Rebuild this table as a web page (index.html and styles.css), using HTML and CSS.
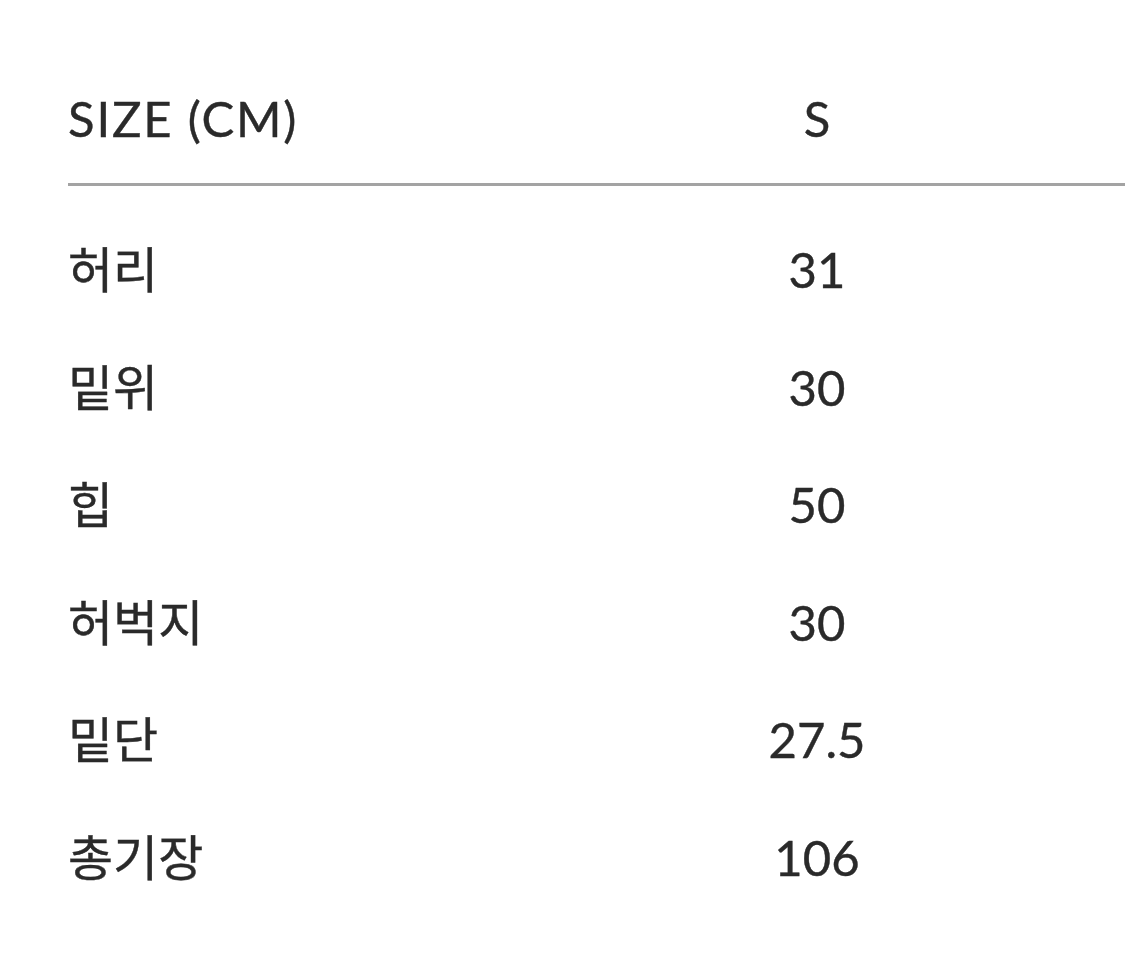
FILE: index.html
```html
<!DOCTYPE html>
<html lang="ko">
<head>
<meta charset="utf-8">
<link rel="stylesheet" href="styles.css">
</head>
<body>
<div class="table">
  <div class="row head">
    <div class="label">SIZE (CM)</div>
    <div class="val">S</div>
  </div>
  <div class="rule"></div>
  <div class="body">
    <div class="row"><div class="label">허리</div><div class="val">31</div></div>
    <div class="row"><div class="label">밑위</div><div class="val">30</div></div>
    <div class="row"><div class="label">힙</div><div class="val">50</div></div>
    <div class="row"><div class="label">허벅지</div><div class="val">30</div></div>
    <div class="row"><div class="label">밑단</div><div class="val">27.5</div></div>
    <div class="row"><div class="label">총기장</div><div class="val">106</div></div>
  </div>
</div>
</body>
</html>
```
FILE: styles.css
```css
html, body {
  margin: 0;
  padding: 0;
  background: #ffffff;
}
body {
  font-family: Lato, "Noto Sans CJK KR", sans-serif;
  color: #2a2a2a;
  font-size: 49px;
  -webkit-text-stroke: 0.4px #2a2a2a;
}
.table {
  padding: 59px 0 0 68px;
}
.row {
  display: grid;
  grid-template-columns: 500px 498px 1fr;
  align-items: center;
  height: 117.5px;
  line-height: 1;
}
.head {
  height: 118px;
}
.head .label {
  letter-spacing: 1.8px;
}
.val {
  text-align: center;
}
.rule {
  margin-top: 6px;
  height: 3px;
  background: #a3a3a3;
}
.body {
  padding-top: 25px;
}
```
